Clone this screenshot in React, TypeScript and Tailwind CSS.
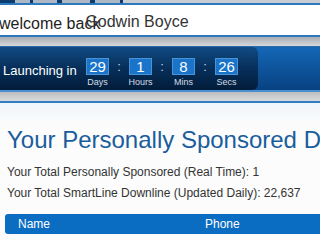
export default function App() {
  const units = [
    { value: '29', label: 'Days' },
    { value: '1', label: 'Hours' },
    { value: '8', label: 'Mins' },
    { value: '26', label: 'Secs' },
  ];

  return (
    <div className="w-[320px] h-[240px] overflow-hidden bg-[#fcfcfc] font-['Liberation_Sans',Arial,sans-serif]">
      {/* top tab strip */}
      <div className="flex h-[3px]">
        <div className="w-[15px] bg-[#0d3c6e]" />
        <div className="w-[15px] bg-[#aeb8c4]" />
        <div className="w-[3px] bg-[#0d3c6e]" />
        <div className="w-[24px] bg-[#aeb8c4]" />
        <div className="w-[5px] bg-[#0d3c6e]" />
        <div className="w-[28px] bg-[#aeb8c4]" />
        <div className="w-[5px] bg-[#0d3c6e]" />
        <div className="w-[25px] bg-[#aeb8c4]" />
        <div className="w-[3px] bg-[#0d3c6e]" />
        <div className="flex-1 bg-[#c9ced4]" />
      </div>

      {/* welcome box */}
      <div className="h-[34px] border-y-2 border-[#2b78bd] bg-white flex items-start pt-[10px] text-[16px] leading-[18px] text-[#222]">
        <span className="whitespace-nowrap -ml-[1px]">welcome back</span>
        <span className="whitespace-nowrap -ml-[15px] -mt-[2px] text-[#333]">Godwin Boyce</span>
      </div>

      <div className="h-[9px] bg-gradient-to-b from-[#a9adb2] to-[#d6d8da]" />

      {/* countdown */}
      <div className="h-[1px] bg-[#2a6aa8]" />
      <div className="flex h-[43px] bg-gradient-to-b from-[#1467b6] to-[#084282]">
        <div className="w-[258px] rounded-r-[6px] bg-gradient-to-b from-[#114b83] via-[#072f5a] to-[#021c39] flex items-start pt-[11px]">
          <div className="w-[86px] pl-[3px] mt-[4px] text-[13px] leading-[17px] text-white whitespace-nowrap">
            Launching in
          </div>
          {units.map((u, i) => (
            <div key={u.label} className="flex items-start">
              {i > 0 && (
                <div className="w-[20px] text-center text-[13px] leading-[17px] text-[#c7d4e2]">:</div>
              )}
              <div className="w-[23px] flex flex-col items-center">
                <div className="w-[23px] h-[17px] bg-[#1a74c9] border border-[#4a93d6] text-white text-[15px] leading-[15px] text-center">
                  {u.value}
                </div>
                <div className="mt-[2px] text-[9px] leading-[11px] text-[#d5dde6] whitespace-nowrap">{u.label}</div>
              </div>
            </div>
          ))}
        </div>
        <div className="flex-1" />
      </div>
      <div className="h-[2px] bg-[#4a8fcf]" />
      <div className="h-[9px] bg-gradient-to-b from-[#bcbec0] to-[#d9dadb]" />
      <div className="h-[2px] bg-[#2e7dc3]" />

      {/* content */}
      <div className="px-[7px] bg-gradient-to-b from-[#eef5fb] to-[#fcfcfc] to-[20px]">
        <h1 className="pt-[23px] text-[24px] leading-[28px] text-[#1a5d9c] whitespace-nowrap">
          Your Personally Sponsored Downline
        </h1>
        <p className="mt-[8px] text-[12px] leading-[21px] text-[#333] whitespace-nowrap">
          Your Total Personally Sponsored (Real Time): 1
        </p>
        <p className="text-[12px] leading-[21px] text-[#333] whitespace-nowrap">
          Your Total SmartLine Downline (Updated Daily): 22,637
        </p>
      </div>

      <div className="mt-[10px] ml-[5px] h-[20px] rounded-l-[3px] bg-[#0b6dc2] flex items-center text-white text-[12px] leading-[20px]">
        <div className="w-[200px] pl-[13px]">Name</div>
        <div>Phone</div>
      </div>
    </div>
  );
}
